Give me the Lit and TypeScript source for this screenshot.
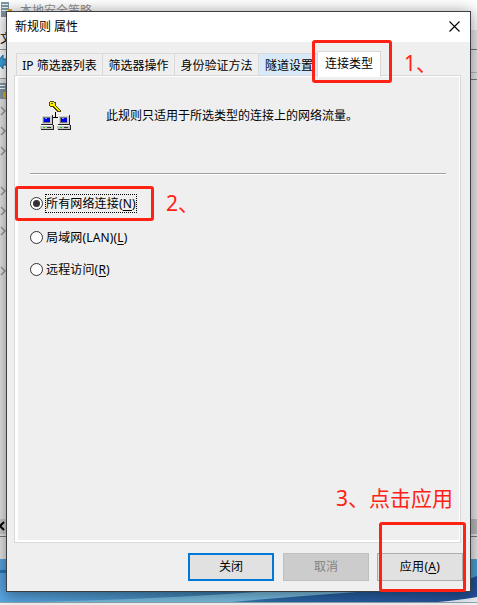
import { LitElement, html, css, svg } from "lit";
import { customElement } from "lit/decorators.js";

const networkIcon = () => {
  const pc = (x: number) => svg`<g transform="translate(${x} 1)">
    <path d="M2 14H13V24H14V29H1V28H0V24H1V15Z" fill="#222"/>
    <path d="M1 14H12V23H1Z" fill="#cfcfcf"/>
    <path d="M1 14H12V15H2V23H1Z" fill="#f4f4f4"/>
    <path d="M3 16H10V22H3Z" fill="#777"/>
    <path d="M4 17H10V21H4Z" fill="#0000e8"/>
    <path d="M5 17H7V18H5Z" fill="#6f98ff"/>
    <path d="M0 24H13V28H0Z" fill="#c4c4c4"/>
    <path d="M0 24H12V25H0Z" fill="#fff"/>
    <path d="M3 26H5V27H3Z" fill="#0d0"/>
    <path d="M7 26H11V27H7Z" fill="#333"/>
  </g>`;
  return html`<svg class="net" viewBox="0 0 32 32" shape-rendering="crispEdges">
    <path d="M15 12H16V17H15ZM13 17H18V18H13Z" fill="#000"/>
    <path d="M10 1H14V2H16V6L21 10V12H17L12 7H10V6H9V2H10Z" fill="#4a4a00"/>
    <path d="M10 2H14V3H15V6L20 10V11H18L13 6H10Z" fill="#ffee00"/>
    <path d="M11 3H13V4H11Z" fill="#555"/>
    ${pc(0)}${pc(17)}
  </svg>`;
};

@customElement("app-root")
export class AppRoot extends LitElement {
  static styles = css`
    :host { display: block; position: relative; width: 477px; height: 605px; overflow: hidden;
      font: 12px/16px "Noto Sans", "Noto Sans CJK SC", sans-serif; color: #000; background: #f4f4f4; }
    * { box-sizing: border-box; }
    svg { display: block; }
    .backdrop { display: flex; flex-direction: column; height: 605px; }
    .btitle { height: 30px; flex: none; background: #fff; color: #909090; padding: 3px 0 0 20px; line-height: 16px; white-space: pre; }
    .bbody { height: 529px; flex: none; background: #e8e8e8; }
    .wall { height: 44px; flex: none; }
    .wall svg { width: 477px; height: 44px; }
    .scene { position: absolute; left: 0; top: 0; width: 477px; height: 605px; }
    .dialog { position: absolute; left: 6px; top: 11px; width: 465px; height: 581px; border: 1px solid #3c3e42;
      background: #efefef; box-shadow: 0 2px 14px 1px rgba(0,0,0,.42); display: flex; flex-direction: column; }
    .title { height: 30px; flex: none; background: #fff; display: flex; justify-content: space-between; padding: 7px 10px 0 8px; }
    .title svg { width: 11px; height: 11px; margin-top: 2px; }
    .tabs { display: flex; align-items: flex-end; height: 34px; flex: none; padding-left: 9px; }
    .tab { height: 23px; border: 1px solid #d9d9d9; border-right: 0; border-bottom: 0; padding-top: 4px; text-align: center; white-space: nowrap; }
    .t0 { width: 86px; } .t1 { width: 72px; } .t2 { width: 84px; } .t3 { width: 59px; background: #d8eaf9; text-align: left; padding-left: 6px; }
    .t4 { width: 64px; height: 26px; margin-bottom: -1px; position: relative; background: #fff; border-right: 1px solid #d9d9d9; }
    .pane { margin-left: 7px; width: 447px; height: 468px; margin-top: -1px; flex: none; border: 1px solid #d9d9d9; background: #efefef;
      box-shadow: inset 3px 0 #fff, inset -1px 0 #fff, inset 0 1px #fff, inset 0 -2px #fff; padding: 22px 14px 0 15px; }
    .intro { display: flex; height: 75px; }
    .net { width: 32px; height: 32px; margin: 2px 0 0 10px; }
    .desc { margin: 10px 0 0 34px; white-space: nowrap; }
    .rule { height: 2px; border-top: 1px solid #a0a0a0; border-bottom: 1px solid #fff; }
    .radios { display: flex; flex-direction: column; padding-top: 18px; }
    .radio { display: flex; align-items: center; height: 20px; }
    .radio + .radio { margin-top: 14px; } .radio + .radio.last { margin-top: 12px; }
    .radio svg { width: 13px; height: 13px; margin-right: 2px; flex: none; }
    .label { height: 19px; border: 1px dotted transparent; line-height: 17px; white-space: nowrap; letter-spacing: .15px; }
    .focus { border-color: #000; width: 92px; }
    .buttons { display: flex; justify-content: flex-end; padding: 10px 7px 0 0; }
    .btn { width: 86px; height: 28px; border: 1px solid #adadad; background: #e1e1e1; text-align: center; line-height: 25px; margin-left: 9px; }
    .btn.apply { margin-left: 8px; letter-spacing: .3px; }
    .btn.primary { border: 2px solid #0078d7; line-height: 23px; }
    .btn.off { background: #ccc; border-color: #bfbfbf; color: #838383; }
    u { text-underline-offset: 2px; text-decoration-skip-ink: none; }
    .mark { position: absolute; border: 3px solid #ff2114; border-radius: 3px; }
    .m1 { left: 312px; top: 40px; width: 80px; height: 43px; }
    .m2 { left: 15px; top: 186px; width: 139px; height: 35px; }
    .m3 { left: 379px; top: 522px; width: 87px; height: 70px; }
    .note { position: absolute; color: #ff2114; font-size: 21px; line-height: 26px; white-space: nowrap; }
    .n1 { left: 404px; top: 50px; } .n2 { left: 166px; top: 190px; } .n3 { left: 336px; top: 485px; }
  `;

  radio(label: string, key: string, on = false, last = false) {
    return html`<div class="radio ${last ? "last" : ""}">
      <svg viewBox="0 0 13 13"><circle cx="6.5" cy="6.5" r="6" fill="#fff" stroke="#333"/>
      ${on ? svg`<circle cx="6.5" cy="6.5" r="3.5" fill="#333"/>` : ""}</svg>
      <span class="label ${on ? "focus" : ""}">${label}(<u>${key}</u>)</span></div>`;
  }

  render() {
    return html`
      <div class="backdrop">
        <div class="btitle">本地安全策略</div>
        <div class="bbody"></div>
        <div class="wall"><svg viewBox="0 0 477 44" preserveAspectRatio="none">
          <defs>
            <linearGradient id="g"><stop offset="0" stop-color="#58a6e2"/><stop offset=".4" stop-color="#4389ba"/><stop offset=".6" stop-color="#2a66a5"/><stop offset="1" stop-color="#23509a"/></linearGradient>
          </defs>
          <path d="M0 0H477V44H0Z" fill="url(#g)"/>
          <path d="M30 43Q170 40 270 32H370Q300 37 232 43Z" fill="#78bce0"/>
          <path d="M455 0H477V17Q466 22 455 24Z" fill="#4a9fd2"/>
          <path d="M438 43Q460 41 477 38V43Z" fill="#e8f0f6"/>
          <path d="M0 11H7V14H0Z" fill="#2379b5"/>
          <path d="M0 43H477V44H0Z" fill="#93a4b2"/>
        </svg></div>
      </div>
      <svg class="scene" viewBox="0 0 477 605">
        <path d="M1 2H9V17H1Z" fill="#7f97a5"/><path d="M2 4.500H8M2 7.500H8M2 10.500H8" stroke="#e8f3f8"/>
        <path d="M8 9H12V12H8Z" fill="#d9a62c"/>
        <path d="M0 30H7V78H0Z" fill="#fff"/>
        <text x="0" y="43" font-size="12">文</text>
        <path d="M0 49.5H7M0 78.5H7" stroke="#9b9da5"/>
        <path d="M-3 62L3 55V59H7V65H3V69Z" fill="#3ba2df" stroke="#1976ac"/>
        <path d="M0 83H7V99H0Z" fill="#8299a8"/><path d="M0 85.500H5M0 88.500H5" stroke="#fff"/><path d="M3 92H7V98H3Z" fill="#e7ae2f"/>
        ${[111, 131, 151, 191, 211, 231, 271].map(y => svg`<path d="M1 ${y - 4}L5 ${y}L1 ${y + 4}" fill="none" stroke="#9a9a9a" stroke-width="1.5"/>`)}
        <path d="M0 519H7V534H0Z" fill="#ccc"/><path d="M4 522L0 526L4 530" fill="none" stroke="#000" stroke-width="2"/>
        <path d="M0 536.5H7" stroke="#73777d"/>
        <path d="M471 519H477V534H471Z" fill="#bbb"/>
        <path d="M470 49.5H477M470 79.5H477M470 536.5H477" stroke="#777780"/><path d="M470 72.5H477" stroke="#bbb"/>
      </svg>
      <div class="dialog">
        <div class="title"><span>新规则 属性</span><svg viewBox="0 0 11 11"><path d="M.5.5L10.5 10.5M10.5.5L.5 10.5" stroke="#000" stroke-width="1.1"/></svg></div>
        <div class="tabs">
          <div class="tab t0">IP 筛选器列表</div><div class="tab t1">筛选器操作</div><div class="tab t2">身份验证方法</div>
          <div class="tab t3">隧道设置</div><div class="tab t4">连接类型</div>
        </div>
        <div class="pane">
          <div class="intro">${networkIcon()}<div class="desc">此规则只适用于所选类型的连接上的网络流量。</div></div>
          <div class="rule"></div>
          <div class="radios">
            ${this.radio("所有网络连接", "N", true)}
            ${this.radio("局域网(LAN)", "L")}
            ${this.radio("远程访问", "R", false, true)}
          </div>
        </div>
        <div class="buttons"><div class="btn primary">关闭</div><div class="btn off">取消</div><div class="btn apply">应用(<u>A</u>)</div></div>
      </div>
      <div class="mark m1"></div><div class="mark m2"></div><div class="mark m3"></div>
      <div class="note n1">1、</div><div class="note n2">2、</div><div class="note n3">3、点击应用</div>
    `;
  }
}
